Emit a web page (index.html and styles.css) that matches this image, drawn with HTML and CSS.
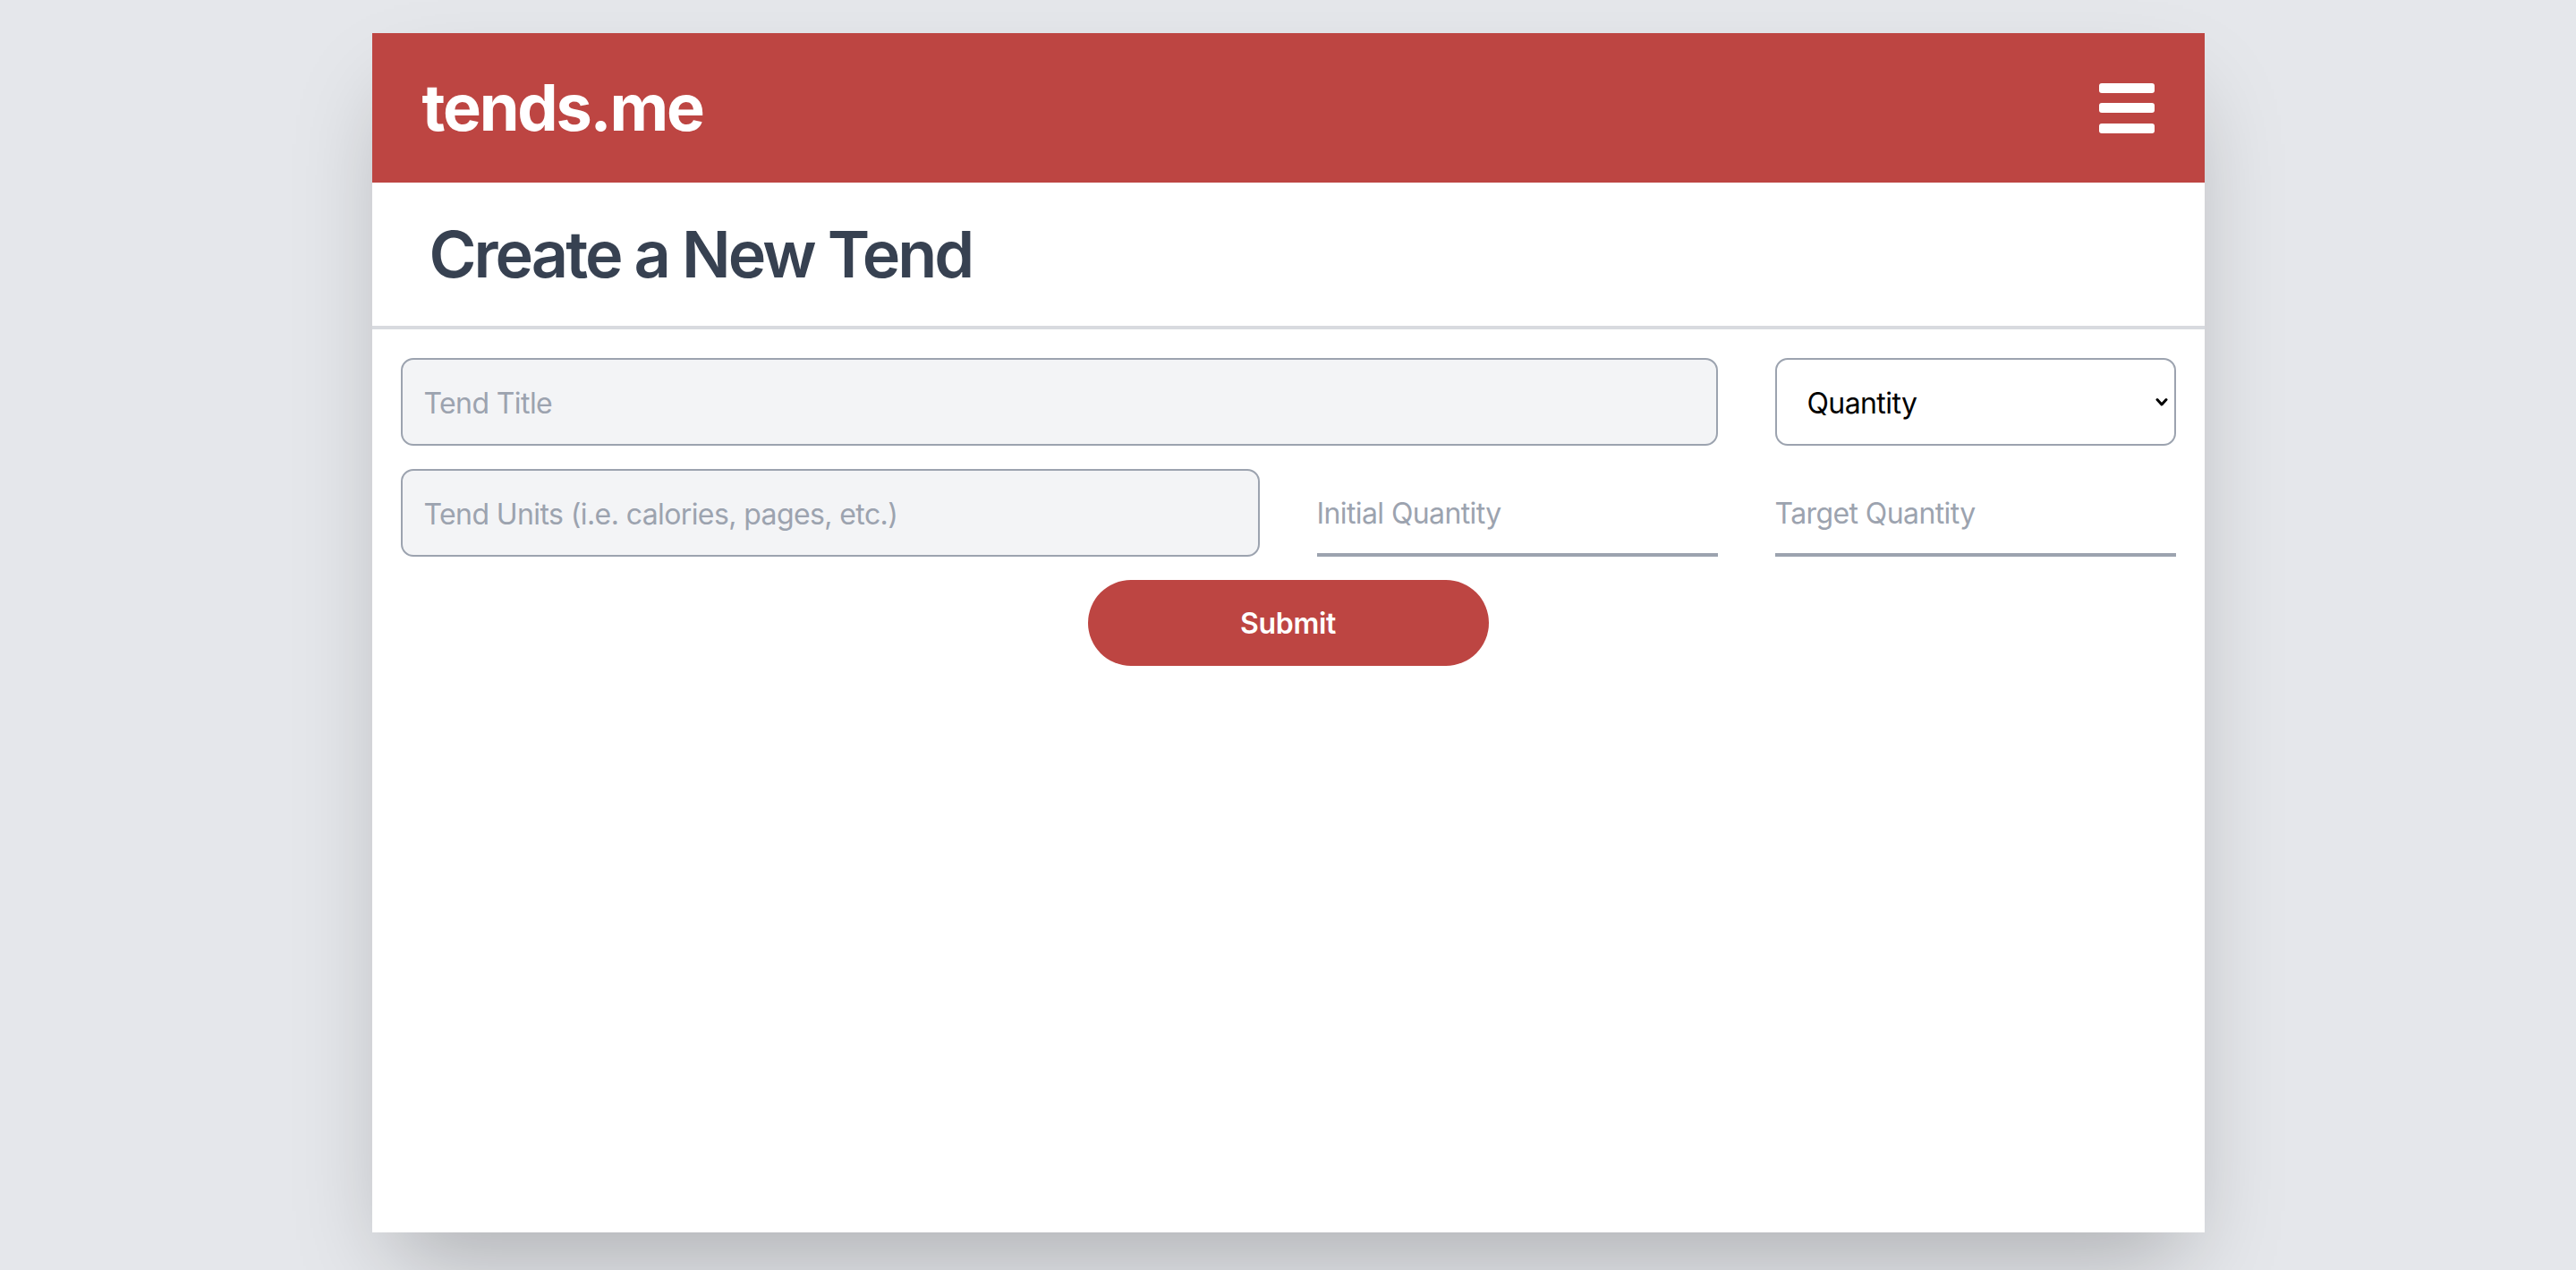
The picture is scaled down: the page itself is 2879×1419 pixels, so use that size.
FILE: index.html
```html
<!DOCTYPE html>
<html lang="en">
<head>
<meta charset="utf-8">
<title>tends.me</title>
<link rel="stylesheet" href="styles.css">
</head>
<body>
<div class="card">
  <header class="topbar">
    <div class="logo">tends.me</div>
    <div class="burger" aria-label="menu"><span></span><span></span><span></span></div>
  </header>
  <div class="page-head">
    <h1>Create a New Tend</h1>
  </div>
  <form class="form">
    <input class="field span3" type="text" placeholder="Tend Title">
    <div class="select-wrap">
      <select class="field select">
        <option>Quantity</option>
      </select>
      <svg class="chev" viewBox="0 0 14 11" width="14" height="11"><path d="M2 2.5 L7 8 L12 2.5" fill="none" stroke="#000" stroke-width="3" stroke-linecap="round" stroke-linejoin="round"/></svg>
    </div>
    <input class="field span2" type="text" placeholder="Tend Units (i.e. calories, pages, etc.)">
    <input class="line" type="text" placeholder="Initial Quantity">
    <input class="line" type="text" placeholder="Target Quantity">
    <button class="submit" type="button">Submit</button>
  </form>
</div>
</body>
</html>
```

FILE: styles.css
```css
html, body {
  margin: 0;
  padding: 0;
}
body {
  background: #e5e7eb;
  font-family: Inter, "Noto Sans", "Liberation Sans", sans-serif;
  height: 1419px;
  overflow: hidden;
}
.card {
  width: 2048px;
  height: 1340px;
  margin: 37px auto 0;
  background: #ffffff;
  box-shadow: 0 50px 100px -24px rgba(0, 0, 0, 0.25);
}
.topbar {
  height: 167px;
  background: #bd4542;
  display: flex;
  align-items: center;
  justify-content: space-between;
  padding: 0 56px 0 56px;
  box-sizing: border-box;
}
.logo {
  color: #fff;
  font-size: 72px;
  font-weight: 700;
  letter-spacing: -2.2px;
  line-height: 1;
  margin-top: -2px;
}
.burger {
  width: 62px;
  height: 56px;
  display: flex;
  flex-direction: column;
  justify-content: space-between;
}
.burger span {
  display: block;
  height: 11px;
  background: #fff;
  border-radius: 3px;
}
.page-head {
  height: 160px;
  border-bottom: 4px solid #d8dadf;
  display: flex;
  align-items: center;
  padding-left: 64px;
}
.page-head h1 {
  margin: 0;
  font-size: 72px;
  font-weight: 600;
  color: #374151;
  letter-spacing: -3px;
  line-height: 1;
}
.form {
  padding: 32px 32px;
  display: grid;
  grid-template-columns: repeat(4, 448px);
  column-gap: 64px;
  row-gap: 26px;
}
.field {
  height: 98px;
  box-sizing: border-box;
  border: 2px solid #9ca3af;
  border-radius: 14px;
  background: #f3f4f6;
  padding: 3px 24px 0;
  font-family: inherit;
  font-size: 32px;
  letter-spacing: -0.6px;
  color: #111827;
  outline: none;
}
.field::placeholder,
.line::placeholder {
  color: #9ca3af;
}
.span3 { grid-column: span 3; }
.span2 { grid-column: span 2; }
.select-wrap {
  position: relative;
}
.select {
  width: 100%;
  appearance: none;
  -webkit-appearance: none;
  background: #fff;
  padding-left: 34px;
  color: #000;
}
.chev {
  position: absolute;
  right: 9px;
  top: 44px;
  pointer-events: none;
}
.line {
  height: 98px;
  box-sizing: border-box;
  border: none;
  border-bottom: 4px solid #9ca3af;
  background: transparent;
  padding: 4px 0 0;
  font-family: inherit;
  font-size: 32px;
  letter-spacing: -0.6px;
  outline: none;
  width: 100%;
}
.submit {
  grid-column: 1 / -1;
  justify-self: center;
  width: 448px;
  height: 96px;
  border: none;
  border-radius: 48px;
  background: #bd4542;
  color: #fff;
  font-family: inherit;
  font-size: 32px;
  font-weight: 600;
  letter-spacing: -0.3px;
}
```
